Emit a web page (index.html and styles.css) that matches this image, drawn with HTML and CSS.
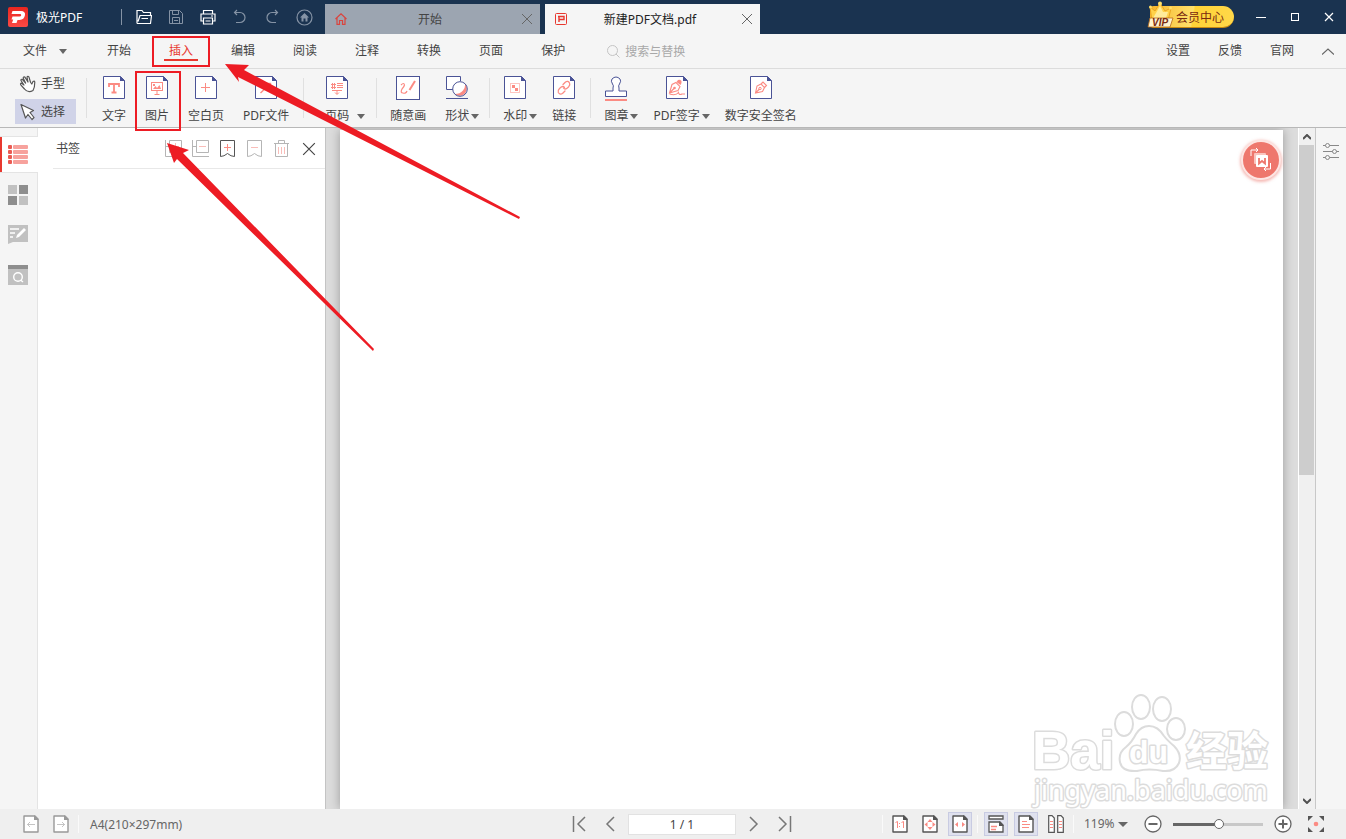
FILE: index.html
```html
<!doctype html>
<html lang="zh-CN">
<head>
    <meta charset="utf-8">
    <title>极光PDF</title>
    <meta name="viewport" content="width=device-width, initial-scale=1">
    <link rel="stylesheet" href="styles.css">
</head>

<body>
    <!-- shared shapes -->
    <svg class="sprite" aria-hidden="true">
        <symbol id="doc" viewBox="0 0 22 23">
            <path d="M.5.5H17.5L21.5 4.5V22.5H.5z" fill="#fff" stroke="#4a5396"/>
            <path d="M17 0L22 5H17z" fill="#4a5396"/>
        </symbol>
        <symbol id="sheet" viewBox="0 0 16 18">
            <path d="M1 1H12L15 4V17H1z" fill="#fff" stroke="currentColor" stroke-width="1.4" stroke-linejoin="round"/>
            <path d="M11 0L16 5H11z" fill="currentColor"/>
        </symbol>
        <symbol id="close" viewBox="0 0 12 12">
            <path d="M1 1L11 11M11 1L1 11" fill="none" stroke="currentColor"/>
        </symbol>
    </svg>

    <div class="app">
        <header class="titlebar">
            <div class="brand">
                <svg class="logo" width="20" height="20" viewBox="0 0 20 20">
                    <defs>
                        <linearGradient id="logo-bg" x1="0" y1="0" x2="0" y2="1">
                            <stop offset="0" stop-color="#e8261f"/>
                            <stop offset="1" stop-color="#fb4a45"/>
                        </linearGradient>
                    </defs>
                    <rect width="20" height="20" rx="2" fill="url(#logo-bg)"/>
                    <path d="M4.500 4H13Q17.500 4.300 17 8Q16.200 12.800 11.500 13H9.500L8.500 16H4L5.200 12.500H3.500L4.500 9.500H11.500Q13 9.400 13.200 8.200Q13.300 7 12 7H3.500z" fill="#fff"/>
                </svg>
                <span>极光PDF</span>
            </div>
            <div class="quick">
                <button aria-label="打开"><svg width="16" height="16" viewBox="0 0 16 16" stroke="#fff" fill="none" stroke-width="1.200"><path d="M1 14.500V1.500H6L7.500 3.500H14.500V6M1 14.500H14.500L15.500 6.500H4L2 12.500M5.500 9.500H12"/></svg></button>
                <button aria-label="保存"><svg width="16" height="16" viewBox="0 0 16 16" stroke="#8593a5" fill="none"><path d="M1.500 1.500H11.500L14.500 4.500V14.500H1.500zM4.500 1.500V5.500H10.500V1.500M4.500 14.500V8.500H11.500V14.500M6 11.500H10"/></svg></button>
                <button aria-label="打印"><svg width="16" height="16" viewBox="0 0 16 16" stroke="#fff" fill="none" stroke-width="1.200"><path d="M3.500 5V1.500H12.500V5M3.500 12H1V5H15V12H12.500M3.500 9H12.500V15H3.500zM5.500 12H10.500M11 7H13"/></svg></button>
                <button aria-label="撤销"><svg width="16" height="16" viewBox="0 0 16 16" stroke="#8593a5" fill="none" stroke-width="1.200"><path d="M5 1L2.500 3.500L5 6M2.500 3.500H8A5 5 0 0 1 8 13.500H4"/></svg></button>
                <button aria-label="重做"><svg width="16" height="16" viewBox="0 0 16 16" stroke="#8593a5" fill="none" stroke-width="1.200"><path d="M11 1L13.500 3.500L11 6M13.500 3.500H8A5 5 0 0 0 8 13.500H12"/></svg></button>
                <button aria-label="主页"><svg width="17" height="17" viewBox="0 0 17 17"><circle cx="8.500" cy="8.500" r="7.500" fill="none" stroke="#8593a5" stroke-width="1.200"/><path d="M8.500 4L13 8.500H11.500V12.500H9.500V9.500H7.500V12.500H5.500V8.500H4z" fill="#8593a5"/></svg></button>
            </div>
            <div class="tabs">
                <div class="tab">
                    <svg width="12" height="12" viewBox="0 0 12 12" fill="none" stroke="#d9453f" stroke-width="1.200"><path d="M.5 6L6 .800L11.500 6M2 5V11.300H4.500V7.500H7.500V11.300H10V5"/></svg>
                    <a href="#">开始</a>
                    <button aria-label="关闭"><svg width="12" height="12"><use href="#close"/></svg></button>
                </div>
                <div class="tab active">
                    <svg width="12" height="12" viewBox="0 0 12 12" fill="none" stroke="#e8382f"><rect x=".500" y=".500" width="11" height="11" rx="1"/><path d="M3 3.500H9V6.500H3.500M4 4V9" stroke-width="1.400"/></svg>
                    <a href="#">新建PDF文档.pdf</a>
                    <button aria-label="关闭"><svg width="12" height="12"><use href="#close"/></svg></button>
                </div>
            </div>
            <button class="vip">
                <svg class="crown" width="27" height="27" viewBox="0 0 27 27">
                    <path d="M3 6L8 10L13 2L18 10L24 7L21 20H5z" fill="#ffd24a" stroke="#e59a1b" stroke-width=".800"/>
                    <circle cx="13" cy="2.500" r="2" fill="#ffe069"/><circle cx="3.500" cy="6" r="1.500" fill="#ffe069"/><circle cx="23.500" cy="7" r="1.500" fill="#ffe069"/>
                    <path d="M13 5L16 11L21 11L19 17H6L9 12z" fill="#ffec9b"/>
                    <path d="M3 17H26L23 26H1z" fill="#fff3cd" stroke="#b96a16" stroke-width=".800"/>
                    <text x="5" y="25" class="crown-text">VIP</text>
                </svg>
                会员中心
            </button>
            <div class="window-controls">
                <button aria-label="最小化"><svg width="10" height="10" viewBox="0 0 10 10" stroke="#fff"><path d="M0 5.500H10"/></svg></button>
                <button aria-label="最大化"><svg width="10" height="10" viewBox="0 0 10 10" stroke="#fff" fill="none"><rect x="1.500" y="1.500" width="7" height="7"/></svg></button>
                <button aria-label="关闭"><svg width="10" height="10" viewBox="0 0 10 10" stroke="#fff" stroke-width="1.200"><path d="M1 1L9 9M9 1L1 9"/></svg></button>
            </div>
        </header>

        <nav class="menubar">
            <button class="file-menu">文件<i class="caret"></i></button>
            <div class="menu">
                <a href="#">开始</a>
                <a href="#" class="current">插入</a>
                <a href="#">编辑</a>
                <a href="#">阅读</a>
                <a href="#">注释</a>
                <a href="#">转换</a>
                <a href="#">页面</a>
                <a href="#">保护</a>
            </div>
            <label class="search">
                <svg width="13" height="13" viewBox="0 0 13 13" fill="none" stroke="#c4c4c4"><circle cx="5.500" cy="5.500" r="5"/><path d="M9 9L12.500 12.500"/></svg>
                <input type="text" placeholder="搜索与替换" aria-label="搜索与替换">
            </label>
            <div class="links">
                <a href="#">设置</a>
                <a href="#">反馈</a>
                <a href="#">官网</a>
                <button aria-label="收起"><svg width="12" height="7" viewBox="0 0 12 7" fill="none" stroke="#666" stroke-width="1.200"><path d="M0 6.500L6 1L12 6.500"/></svg></button>
            </div>
        </nav>

        <div class="toolbar">
            <div class="modes">
                <button><svg width="18" height="18" viewBox="0 0 18 18" fill="#fff" stroke="#555" stroke-width="1.200" stroke-linejoin="round" stroke-linecap="round"><path d="M5.500 14L1.800 9.800Q1 8.300 2.500 8.200L5 10L2 5.500Q1.800 4 3.300 4.300L6.600 8L4.200 3Q4.400 1.300 5.900 2.100L9 7L8 2Q8.800.700 9.900 1.800L11.600 7.500L12.800 9L14 6.500Q15.500 5.500 15.800 7Q15.800 12.500 14 15.500Q9 18.500 5.500 14z"/></svg>手型</button>
                <button class="on"><svg width="18" height="18" viewBox="0 0 18 18" fill="#fff" stroke="#555" stroke-width="1.200" stroke-linejoin="round"><path d="M2 1.500L14.500 7.500L11 9.500L15 14.500L13 16.500L9 11.500L6.500 15z"/></svg>选择</button>
            </div>
            <div class="group group-pages">
                <button class="tool"><svg width="22" height="23"><use href="#doc"/><path d="M6 11V8H16V11M11 8V16.500M8.500 16.500H13.500" fill="none" stroke="#fb8b83" stroke-width="1.800"/></svg><span>文字</span></button>
                <button class="tool"><svg width="22" height="23"><use href="#doc"/><g fill="none" stroke="#fb8b83"><rect x="5.500" y="6.500" width="11" height="8"/><path d="M11 15V18M8.500 18.500H13.500"/></g><path d="M7 13L9.500 10L11 12L13.500 9L15 13z" fill="#fb8b83"/><rect x="7" y="8" width="2" height="2" fill="#fb8b83"/></svg><span>图片</span></button>
                <button class="tool"><svg width="22" height="23"><use href="#doc"/><path d="M6 11.500H15M10.500 7V16" stroke="#fb8b83"/></svg><span>空白页</span></button>
                <button class="tool"><svg width="22" height="23"><use href="#doc"/><path d="M5.500 17L15 8M10 7.500H15.500V13" fill="none" stroke="#fb8b83" stroke-width="1.400"/></svg><span>PDF文件</span></button>
            </div>
            <div class="group group-number">
                <button class="tool"><svg width="22" height="23"><use href="#doc"/><path d="M5 8.500H10M5 11.500H10M6.500 7V13M8.500 7V13M11 7.500H17M11 9.500H17M11 11.500H17M6 14.500H16M11 14V18M9 16.500L11 18.500L13 16.500" fill="none" stroke="#fb8b83"/></svg><span>页码</span><i class="caret"></i></button>
            </div>
            <div class="group group-draw">
                <button class="tool"><svg width="24" height="24"><rect x=".500" y=".500" width="23" height="23" fill="#fff" stroke="#4a5396"/><path d="M5 9Q8 6 8.500 9Q8 11 6 13Q4 17 7 17Q10 18 11 15" fill="none" stroke="#fb8b83" stroke-width="1.200"/><path d="M13.500 14L19 5" stroke="#fb8b83" stroke-width="2"/></svg><span>随意画</span></button>
                <button class="tool"><svg width="22" height="23"><path d="M7 13.500H.500V.500H14.500V5" fill="#fff" stroke="#4a5396"/><circle cx="14" cy="13" r="7.300" fill="#fff"/><path d="M19 7.700A7.300 7.300 0 0 1 8.700 18Q14 18 17 14.500Q19.500 11.500 19 7.700z" fill="#fb8b83"/><circle cx="14" cy="13" r="7.300" fill="none" stroke="#4a5396"/><path d="M0 22.500H22" stroke="#4a5396"/></svg><span>形状</span><i class="caret"></i></button>
            </div>
            <div class="group">
                <button class="tool"><svg width="22" height="23"><use href="#doc"/><rect x="6.500" y="7.500" width="9" height="9" fill="none" stroke="#fb8b83" stroke-dasharray="1 1"/><path d="M8 9H11V12H14V15H11V12H8z" fill="#fb8b83"/></svg><span>水印</span><i class="caret"></i></button>
                <button class="tool"><svg width="22" height="23"><use href="#doc"/><g fill="none" stroke="#fb8b83" stroke-width="1.300" stroke-linecap="round"><path d="M10 8.500L12.500 6Q15 4.500 16.500 7Q17.500 9 15.500 11L13.500 12.700Q11.500 13.500 10.500 12"/><path d="M12 15L9.500 17.500Q7 19 5.300 16.500Q4.500 14.500 6.500 12.500L8.500 10.800Q10.500 10 11.500 11.500"/></g></svg><span>链接</span></button>
            </div>
            <div class="group">
                <button class="tool"><svg width="22" height="25"><path d="M8 15V12Q9 9.500 7.500 8Q5.500 5 7 3Q11 -1 15 3Q16.500 5 14.500 8Q13 9.500 14 12V15H21.500V20.500H.500V15z" fill="#fff" stroke="#4a5396"/><rect y="23" width="22" height="2" fill="#fb8b83"/></svg><span>图章</span><i class="caret"></i></button>
                <button class="tool"><svg width="22" height="23"><use href="#doc"/><path d="M3.500 17L6 8.500L10 6.500L14 10.500L12 14.500zL8 12.500M3.500 18Q10 20 12.500 16.500Q13 19.500 16 18H19" fill="none" stroke="#fb8b83" stroke-width="1.100"/><circle cx="8.500" cy="12" r="1.300" fill="#fb8b83"/><path d="M10.500 6L12 4Q14 3 15.500 5Q16 7 14.500 9z" fill="#fb8b83"/></svg><span>PDF签字</span><i class="caret"></i></button>
                <button class="tool"><svg width="22" height="23"><use href="#doc"/><path d="M5.500 17L7 10L11 8L14.500 11.500L12.500 15.500zL9.500 13M11 8L13 6L16.500 9.500L14.500 11.500" fill="none" stroke="#fb8b83" stroke-width="1.100"/><circle cx="10" cy="12.500" r="1.200" fill="none" stroke="#fb8b83"/></svg><span>数字安全签名</span></button>
            </div>
        </div>

        <main class="workspace">
            <nav class="rail">
                <button class="active" aria-label="书签"><svg width="20" height="20"><g fill="#ea5a52"><rect width="4" height="4" rx="1"/><rect y="5" width="4" height="4" rx="1"/><rect y="10" width="4" height="4" rx="1"/><rect y="15" width="4" height="4" rx="1"/></g><g fill="#f7a29d"><rect x="5" width="15" height="4" rx="1"/><rect x="5" y="5" width="15" height="4" rx="1"/><rect x="5" y="10" width="15" height="4" rx="1"/><rect x="5" y="15" width="15" height="4" rx="1"/></g></svg></button>
                <button aria-label="缩略图"><svg width="20" height="20"><path d="M0 0H9V9H0zM11 11H20V20H11z" fill="#c1c1c1"/><path d="M11 0H20V9H11zM0 11H9V20H0z" fill="#8e8e8e"/></svg></button>
                <button aria-label="注释"><svg width="20" height="20"><path d="M0 0H20V17H5L0 19z" fill="#c1c1c1"/><path d="M2 4H11M2 8H7M2 12H5" stroke="#fff" stroke-width="1.600"/><path d="M8 13L9 10L16 3L18 5L11 12z" fill="#fff"/></svg></button>
                <button aria-label="查找"><svg width="20" height="20"><path d="M0 4H20V20H0z" fill="#c1c1c1"/><path d="M0 0H20V4H0z" fill="#8e8e8e"/><circle cx="10" cy="12" r="4.300" fill="none" stroke="#fff" stroke-width="1.400"/><path d="M12.500 15L15 17" stroke="#fff" stroke-width="1.400"/></svg></button>
            </nav>

            <aside class="panel">
                <div class="panel-head">
                    <h2>书签</h2>
                    <button aria-label="展开"><svg width="18" height="18" fill="none" stroke="#b5b5b5"><path d="M.500 0V16.500H17M.500 6.500H4M4.500.500H16.500V12.500H4.500z"/><path d="M7 6.500H14M10.500 3V10" stroke="#f9bdb9"/></svg></button>
                    <button aria-label="收起"><svg width="18" height="18" fill="none" stroke="#b5b5b5"><path d="M.500 0V16.500H17M.500 6.500H4M4.500.500H16.500V12.500H4.500z"/><path d="M7 6.500H14" stroke="#f9bdb9"/></svg></button>
                    <button aria-label="添加书签"><svg width="18" height="18" fill="none" stroke="#555"><path d="M1.500.500H15.500V16.500Q12 16.500 8.500 13.500Q5 16.500 1.500 16.500z"/><path d="M5 7.500H12M8.500 4V11" stroke="#fb8b83"/></svg></button>
                    <button aria-label="删除书签"><svg width="18" height="18" fill="none" stroke="#b5b5b5"><path d="M1.500.500H15.500V16.500Q12 16.500 8.500 13.500Q5 16.500 1.500 16.500z"/><path d="M5 7.500H12" stroke="#f9bdb9"/></svg></button>
                    <button aria-label="清空"><svg width="18" height="18" fill="none" stroke="#b5b5b5"><path d="M1 3.500H16M5.500 3V.500H11.500V3M2.500 4V16.500H14.500V4"/><path d="M5.500 7V14M8.500 7V14M11.500 7V14" stroke="#f9bdb9"/></svg></button>
                    <button class="panel-close" aria-label="关闭"><svg width="14" height="14"><use href="#close"/></svg></button>
                </div>
            </aside>

            <section class="canvas">
                <div class="page"></div>
                <button class="convert" aria-label="转换为Word">
                    <svg width="22" height="24" viewBox="0 0 22 24"><path d="M1 8V2H7M6 0L8 2L6 4M20.500 15V21H15M16 19L14 21L16 23" fill="none" stroke="#fff"/><rect x="4" y="5" width="12" height="11" rx="1" fill="#f9c4be"/><rect x="6" y="7" width="12" height="12" rx="1" fill="#fff"/><path d="M9 10V15.500L12 13L15 15.500V10" fill="none" stroke="#ee776d" stroke-width="1.800"/></svg>
                </button>
                <svg class="watermark" width="250" height="120" viewBox="0 0 250 120">
                    <text x="2" y="80" class="mark-bai">Bai</text>
                    <g class="mark-paw">
                        <ellipse cx="94" cy="35" rx="9" ry="12"/>
                        <ellipse cx="111" cy="18" rx="9" ry="12"/>
                        <ellipse cx="132" cy="20" rx="9" ry="12"/>
                        <ellipse cx="146" cy="40" rx="9" ry="11"/>
                        <path d="M119 37Q128 37 134 47Q137 51 144 57Q152 65 149 74Q145 83 133 82Q119 79 107 82Q92 83 90 73Q88 64 96 58Q102 53 106 45Q111 37 119 37z"/>
                    </g>
                    <text x="99" y="74" class="mark-du">du</text>
                    <text x="156" y="77" class="mark-cn">经验</text>
                    <text x="4" y="111" class="mark-url">jingyan.baidu.com</text>
                </svg>
            </section>

            <div class="scrollbar">
                <button aria-label="向上"><svg width="8" height="6"><path d="M0 5L4 1L8 5" fill="none" stroke="#505050" stroke-width="2"/></svg></button>
                <div class="track"><div class="thumb"></div></div>
                <button aria-label="向下"><svg width="8" height="6"><path d="M0 1L4 5L8 1" fill="none" stroke="#505050" stroke-width="2"/></svg></button>
            </div>

            <aside class="props">
                <button aria-label="属性"><svg width="16" height="18" fill="#f5f5f5" stroke="#888"><path d="M0 3.500H16M0 9.500H16M0 15.500H16"/><circle cx="4.500" cy="3.500" r="2"/><circle cx="11.500" cy="9.500" r="2"/><circle cx="4.500" cy="15.500" r="2"/></svg></button>
            </aside>
        </main>

        <footer class="statusbar">
            <div class="page-info">
                <button class="muted" aria-label="上一视图"><svg width="16" height="18"><use href="#sheet"/><path d="M4 9.500H12M7 7L4.500 9.500L7 12" fill="none" stroke="#c4c4c4"/></svg></button>
                <button class="muted" aria-label="下一视图"><svg width="16" height="18"><use href="#sheet"/><path d="M4 9.500H12M9 7L11.500 9.500L9 12" fill="none" stroke="#c4c4c4"/></svg></button>
                <span class="size">A4(210×297mm)</span>
            </div>
            <div class="pager">
                <button aria-label="首页"><svg width="14" height="16"><path d="M1.500 0V16M13 1L6 8L13 15"/></svg></button>
                <button aria-label="上一页"><svg width="10" height="16"><path d="M9 1L2 8L9 15"/></svg></button>
                <input type="text" value="1 / 1" aria-label="页码">
                <button aria-label="下一页"><svg width="10" height="16"><path d="M1 1L8 8L1 15"/></svg></button>
                <button aria-label="末页"><svg width="14" height="16"><path d="M12.500 0V16M1 1L8 8L1 15"/></svg></button>
            </div>
            <div class="views">
                <div class="fit">
                    <button aria-label="实际大小"><svg width="16" height="18"><use href="#sheet"/><path d="M3.500 7.500L5.500 6.500V13M9.500 7.500L11.500 6.500V13M7.500 8V9M7.500 11V12" fill="none" stroke="#fb8b83"/></svg></button>
                    <button aria-label="适合页面"><svg width="16" height="18"><use href="#sheet"/><path d="M8 4L10.500 7H5.500zM8 15L5.500 12H10.500zM2.500 9.500L5.500 7V12zM13.500 9.500L10.500 7V12z" fill="#fb8b83"/></svg></button>
                    <button class="on" aria-label="适合宽度"><svg width="16" height="18"><use href="#sheet"/><path d="M3 9.500L6 7V12zM13 9.500L10 7V12z" fill="#fb8b83"/></svg></button>
                </div>
                <div class="layout">
                    <button class="on" aria-label="连续"><svg width="16" height="18" fill="#fff" stroke="#555" stroke-width="1.300"><path d="M1 1H15V4H1zM1 17V7H12L15 10V17z"/><path d="M11 6L16 11H11z" fill="#555" stroke="none"/><path d="M3 11.500H9M3 14.500H8" stroke="#fb8b83"/></svg></button>
                    <button class="on" aria-label="单页"><svg width="16" height="18"><use href="#sheet"/><path d="M4 6.500H9M4 9.500H12M4 12.500H11" stroke="#fb8b83"/></svg></button>
                    <button aria-label="双页"><svg width="16" height="18" fill="#fff" stroke="#555" stroke-width="1.200"><path d="M.700.700H4L6.300 3V17.300H.700zM9.700.700H13L15.300 3V17.300H9.700z"/><path d="M2 6.500H5M2 9.500H5M2 12.500H5M11 6.500H14M11 9.500H14M11 12.500H14" stroke="#fb8b83"/></svg></button>
                </div>
                <div class="zoom">
                    <label class="zoom-level">
                        <select aria-label="缩放比例"><option>119%</option></select>
                        <i class="caret"></i>
                    </label>
                    <button aria-label="缩小"><svg width="18" height="18" fill="#fff" stroke="#666"><circle cx="9" cy="9" r="8" stroke-width="1.300"/><path d="M4.500 9H13.500" stroke-width="2"/></svg></button>
                    <input type="range" min="0" max="100" value="51" aria-label="缩放">
                    <button aria-label="放大"><svg width="18" height="18" fill="#fff" stroke="#666"><circle cx="9" cy="9" r="8" stroke-width="1.300"/><path d="M4.500 9H13.500M9 4.500V13.500" stroke-width="2"/></svg></button>
                    <button class="fullscreen" aria-label="全屏"><svg width="16" height="16"><path d="M0 0H5L0 5zM16 0V5L11 0zM0 16V11L5 16zM16 16H11L16 11z" fill="#555"/><circle cx="8" cy="8" r="2.300" fill="#fb8b83"/></svg></button>
                </div>
            </div>
        </footer>

        <!-- tutorial marks -->
        <svg class="marks" width="530" height="360" aria-hidden="true">
            <rect x="153" y="37" width="56" height="29"/>
            <rect x="136" y="72" width="44" height="58"/>
            <path d="M225 64L249 65L244 70L520 217L519 219L238 77L239 82z"/>
            <path d="M167 143L189 150L183 153L374 349L373 351L177 159L174 163z"/>
        </svg>
    </div>
</body>
</html>
```
FILE: styles.css
```css
* {
    box-sizing: border-box;
}

body {
    margin: 0;
    font: 12px/16px "Noto Sans", "Noto Sans CJK SC", sans-serif;
    color: #444;
}

button, input, select {
    margin: 0;
    padding: 0;
    border: 0;
    background: none;
    font: inherit;
    color: inherit;
}

a {
    color: inherit;
    text-decoration: none;
}

svg {
    display: block;
    flex: none;
}

.sprite {
    position: absolute;
    width: 0;
    height: 0;
}

.caret {
    border: 4px solid transparent;
    border-top: 5px solid #666;
    border-bottom: 0;
}

.app {
    position: relative;
    display: flex;
    flex-direction: column;
    height: 100vh;
    overflow: hidden;
    background: #f5f5f5;
}

/* title bar */

.titlebar {
    display: flex;
    flex: none;
    height: 34px;
    background: #1a3350;
    color: #fff;
}

.titlebar button {
    display: flex;
    align-items: center;
    justify-content: center;
}

.brand {
    display: flex;
    align-items: center;
    gap: 8px;
    width: 121px;
    padding-left: 8px;
}

.brand span, .tab a {
    padding-top: 2px;
}

.quick {
    display: flex;
    align-items: center;
    padding: 0 5px 0 7px;
    background: linear-gradient(#8593a5, #8593a5) no-repeat 0 9px / 1px 16px;
}

.quick button {
    width: 32px;
    height: 32px;
}

.tabs {
    display: flex;
    gap: 5px;
    padding-top: 4px;
}

.tab {
    display: flex;
    align-items: center;
    width: 215px;
    padding: 0 7px 0 10px;
    background: #9ca5b1;
    color: #444;
}

.tab.active {
    background: #f5f5f5;
    color: #222;
}

.tab a {
    flex: 1;
    padding-right: 8px;
    text-align: center;
}

.tab button {
    color: #666;
}

.titlebar .vip {
    position: relative;
    align-self: flex-start;
    width: 84px;
    height: 22px;
    margin: 6px 10px 0 auto;
    padding: 2px 0 0 16px;
    border-radius: 4px 11px 11px 4px;
    border-bottom: 1px solid #c98a12;
    background: linear-gradient(100deg, #f5b52c, #ffe06a 50%, #ffd337 52%, #ffd84a);
    color: #7a2a10;
}

.crown {
    position: absolute;
    left: -3px;
    bottom: -1px;
}

.crown-text {
    font: italic bold 10px "Liberation Sans", sans-serif;
    fill: #7a2a10;
}

.window-controls {
    display: flex;
}

.window-controls button {
    width: 34px;
}

/* menu bar */

.menubar {
    display: flex;
    flex: none;
    align-items: center;
    height: 35px;
    padding: 0 12px 0 23px;
    border-bottom: 1px solid #dcdcdc;
}

.file-menu {
    display: flex;
    align-items: center;
    gap: 12px;
    margin-right: 35px;
}

.menu {
    display: flex;
    gap: 28px;
}

.menu a {
    padding: 0 5px;
    border-top: 2px solid transparent;
    border-bottom: 2px solid transparent;
}

.menu .current {
    border-bottom-color: #e8382f;
    color: #e8382f;
}

.search {
    display: flex;
    align-items: center;
    gap: 5px;
    margin-left: 37px;
    padding-top: 1px;
}

.search input {
    width: 120px;
    outline: 0;
}

.search input::placeholder {
    color: #a8a8a8;
}

.links {
    display: flex;
    align-items: center;
    gap: 28px;
    margin-left: auto;
}

/* toolbar */

.toolbar {
    display: flex;
    flex: none;
    height: 59px;
    padding-left: 15px;
    border-bottom: 1px solid #b8b8b8;
}

.modes {
    display: flex;
    flex-direction: column;
    gap: 3px;
    width: 71px;
    padding: 2px 10px 0 0;
}

.modes button {
    display: flex;
    align-items: center;
    gap: 4px;
    height: 25px;
    padding-left: 4px;
}

.modes .on {
    background: #d0d3e8;
}

.group {
    display: flex;
    align-items: flex-start;
    gap: 15px;
    padding: 7px 14px 0;
    background: linear-gradient(#e0e0e0, #e0e0e0) no-repeat 0 9px / 1px 40px;
}

.group-pages {
    gap: 19px;
    padding-left: 16px;
}

.group-number {
    padding: 7px 11px 0 22px;
}

.group-draw {
    gap: 19px;
    padding-right: 10px;
}

.tool {
    display: grid;
    grid-template: 32px 16px / auto auto;
    justify-items: center;
    align-items: start;
    white-space: nowrap;
}

.tool svg, .tool span {
    grid-column: 1;
}

.tool .caret {
    grid-area: 2 / 2;
    align-self: center;
    margin: 1px 0 0 2px;
}

.group-number .caret {
    margin-left: 8px;
}

/* work area */

.workspace {
    display: flex;
    flex: 1;
    min-height: 0;
}

.rail {
    display: flex;
    flex-direction: column;
    width: 38px;
    padding-top: 8px;
    border-right: 1px solid #e4e4e4;
}

.rail button {
    display: flex;
    align-items: center;
    height: 40px;
    padding-left: 8px;
}

.rail .active {
    height: 37px;
    margin: 0 -1px 2px 0;
    border: 1px solid #e4e4e4;
    border-width: 1px 0;
    box-shadow: inset 2px 0 #e8382f;
    background: #fff;
}

.panel {
    width: 288px;
    padding-left: 15px;
    border-right: 1px solid #c4c4c4;
    background: #fff;
}

.panel-head {
    display: flex;
    align-items: center;
    height: 41px;
    padding: 1px 2px 0 3px;
    border-bottom: 1px solid #e8e8e8;
}

.panel-head h2 {
    flex: 1;
    margin: 0;
    font: inherit;
}

.panel-head button {
    display: flex;
    justify-content: center;
    width: 27px;
}

.panel-head .panel-close {
    width: 28px;
    color: #444;
}

.canvas {
    position: relative;
    display: flex;
    flex: 1;
    padding: 2px 15px 0 14px;
    overflow: hidden;
    background: #dcdcdc;
}

.page {
    flex: 1;
    background: #fff;
    box-shadow: 0 0 10px rgba(0, 0, 0, .3);
}

.convert {
    position: absolute;
    top: 12px;
    right: 17px;
    display: flex;
    align-items: center;
    justify-content: center;
    width: 40px;
    height: 40px;
    border: 2px solid #fde5e3;
    border-radius: 50%;
    background: #ee776d;
    box-shadow: 0 1px 3px 1px rgba(238, 119, 109, .5);
}

.watermark {
    position: absolute;
    right: 18px;
    bottom: 0;
    fill: #fff;
    stroke: #dcdcdc;
    stroke-width: 2px;
    stroke-linejoin: round;
}

.watermark text {
    paint-order: stroke;
    stroke-width: 3px;
}

.mark-bai {
    font: bold 53px "Liberation Sans", sans-serif;
}

.mark-du {
    font: bold 32px "Liberation Sans", sans-serif;
}

.mark-cn {
    font: bold 41px "Noto Sans CJK SC", sans-serif;
}

.mark-url {
    font: 27px "Noto Sans", sans-serif;
}

.scrollbar {
    display: flex;
    flex-direction: column;
    width: 18px;
    border: 1px solid #fff;
    border-width: 0 1px;
    border-right-color: #c8c8c8;
    background: #f0f0f0;
}

.scrollbar button {
    display: flex;
    align-items: center;
    justify-content: center;
    height: 17px;
}

.track {
    flex: 1;
}

.thumb {
    width: 15px;
    height: 51%;
    background: #cdcdcd;
}

.props {
    display: flex;
    align-items: flex-start;
    justify-content: center;
    width: 30px;
    padding-top: 14px;
}

/* status bar */

.statusbar {
    display: flex;
    flex: none;
    align-items: center;
    height: 30px;
    padding: 0 22px 0 23px;
    background: #efefef;
    color: #666;
}

.statusbar div {
    display: flex;
    align-items: center;
}

.page-info {
    gap: 14px;
}

.muted {
    color: #999;
}

.size {
    height: 18px;
    margin-left: -5px;
    padding: 2px 0 0 11px;
    border-left: 1px solid #fafafa;
}

.pager {
    gap: 19px;
    margin: 0 90px 0 auto;
}

.pager svg {
    fill: none;
    stroke: #777;
    stroke-width: 1.5px;
}

.pager input {
    width: 108px;
    height: 21px;
    margin: 0 -6px;
    border: 1px solid #e2e2e2;
    background: #fff;
    text-align: center;
    color: #444;
}

.statusbar .views > div {
    height: 18px;
    border-left: 1px solid #fafafa;
}

.fit, .layout {
    gap: 6px;
    padding: 0 5px;
    color: #555;
}

.layout {
    padding-left: 6px;
}

.fit button, .layout button {
    display: flex;
    align-items: center;
    justify-content: center;
    width: 24px;
    height: 24px;
}

.statusbar .on {
    border: 1px solid #c8cbe2;
    background: #dfe1ee;
}

.zoom {
    gap: 11px;
    padding-left: 10px;
}

.zoom-level {
    display: flex;
    align-items: center;
    gap: 3px;
    margin-right: 5px;
}

.zoom-level select {
    appearance: none;
}

.zoom-level .caret {
    border-width: 5px 5px 0;
}

.fullscreen {
    margin-left: 5px;
}

.zoom input {
    appearance: none;
    width: 90px;
    height: 12px;
    background: linear-gradient(90deg, #666 51%, #c8c8c8 51%) no-repeat center / 100% 3px;
}

.zoom input::-webkit-slider-thumb {
    appearance: none;
    width: 10px;
    height: 10px;
    border: 1px solid #666;
    border-radius: 50%;
    background: #fff;
}

.marks {
    position: absolute;
    top: 0;
    left: 0;
    pointer-events: none;
    fill: #ed1c24;
}

.marks rect {
    fill: none;
    stroke: #ed1c24;
    stroke-width: 2px;
}
```
